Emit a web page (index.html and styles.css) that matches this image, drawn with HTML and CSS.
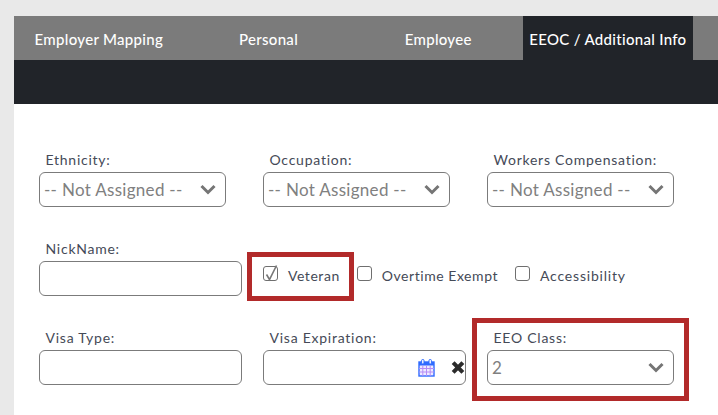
FILE: index.html
```html
<!DOCTYPE html>
<html lang="en">
<head>
    <meta charset="UTF-8">
    <title>EEOC / Additional Info</title>
    <link rel="stylesheet" href="styles.css">
</head>
<body>
    <div class="panel">
        <nav class="tabs">
            <a class="tab">Employer Mapping</a>
            <a class="tab">Personal</a>
            <a class="tab">Employee</a>
            <a class="tab active">EEOC / Additional Info</a>
        </nav>
        <div class="subbar"></div>

        <form class="form">
            <div class="row">
                <div class="field">
                    <label>Ethnicity:</label>
                    <div class="select">
                        <span>-- Not Assigned --</span>
                        <svg class="chevron" viewBox="0 0 16 11"><path d="M1.5 2 8 8.5 14.5 2"/></svg>
                    </div>
                </div>
                <div class="field">
                    <label>Occupation:</label>
                    <div class="select">
                        <span>-- Not Assigned --</span>
                        <svg class="chevron" viewBox="0 0 16 11"><path d="M1.5 2 8 8.5 14.5 2"/></svg>
                    </div>
                </div>
                <div class="field">
                    <label>Workers Compensation:</label>
                    <div class="select">
                        <span>-- Not Assigned --</span>
                        <svg class="chevron" viewBox="0 0 16 11"><path d="M1.5 2 8 8.5 14.5 2"/></svg>
                    </div>
                </div>
            </div>

            <div class="row">
                <div class="field">
                    <label>NickName:</label>
                    <div class="input"></div>
                </div>
                <div class="checks">
                    <div class="check callout callout-veteran">
                        <span class="box">
                            <svg class="tick" viewBox="0 0 16 18"><path d="M3.5 10.5 6.5 15.5 13.5 1.5"/></svg>
                        </span>
                        <span>Veteran</span>
                    </div>
                    <div class="check">
                        <span class="box"></span>
                        <span>Overtime Exempt</span>
                    </div>
                    <div class="check">
                        <span class="box"></span>
                        <span class="wide">Accessibility</span>
                    </div>
                </div>
            </div>

            <div class="row">
                <div class="field">
                    <label>Visa Type:</label>
                    <div class="input"></div>
                </div>
                <div class="field">
                    <label>Visa Expiration:</label>
                    <div class="input date">
                        <svg class="calendar" viewBox="0 0 17 18">
                            <rect x="1" y="3" width="15" height="14" fill="#efeaff" stroke="#2f6bff" stroke-width="1.4"/>
                            <rect x="1" y="3" width="15" height="3.5" fill="#2f6bff"/>
                            <rect x="3.6" y="0.5" width="2.4" height="4.5" rx="1" fill="#fff" stroke="#2f6bff"/>
                            <rect x="11" y="0.5" width="2.4" height="4.5" rx="1" fill="#fff" stroke="#2f6bff"/>
                            <path d="M1 9.5h15M1 13h15M4.8 6.5V17M8.5 6.5V17M12.2 6.5V17" stroke="#b58cf5" stroke-width="1" fill="none"/>
                        </svg>
                        <svg class="clear" viewBox="0 0 13 12"><path d="M2 1.5 11 10.5M11 1.5 2 10.5"/></svg>
                    </div>
                </div>
                <div class="field callout callout-eeo">
                    <label>EEO Class:</label>
                    <div class="select">
                        <span>2</span>
                        <svg class="chevron" viewBox="0 0 16 11"><path d="M1.5 2 8 8.5 14.5 2"/></svg>
                    </div>
                </div>
            </div>
        </form>
    </div>
</body>
</html>
```

FILE: styles.css
```css
body {
    margin: 0;
    height: 415px;
    overflow: hidden;
    background-color: #e9e9e9;
    font-family: 'Lato', 'Open Sans', sans-serif;
    color: #454a57;
}

.panel {
    margin: 16px 0 0 14px;
    height: 399px;
    background: #fff;
}

.tabs {
    display: flex;
    height: 44px;
    background: #7b7b7b;
}

.tab {
    width: 169.7px;
    line-height: 47px;
    text-align: center;
    color: #fff;
    font-size: 15px;
    font-weight: 500;
    letter-spacing: 0.3px;
}

.tab.active {
    background: #212429;
}

.subbar {
    height: 44px;
    background: #212429;
}

.form {
    padding: 46px 0 0 25px;
}

.row {
    display: flex;
    height: 57px;
    margin-bottom: 32px;
}

.field {
    width: 224px;
    flex: none;
}

.field label {
    display: block;
    height: 22px;
    line-height: 20px;
    padding-left: 6.5px;
    font-size: 14px;
    letter-spacing: 0.75px;
}

.select,
.input {
    box-sizing: border-box;
    height: 35px;
    border: 1px solid #7b7b7b;
    border-radius: 6px;
    background: #fff;
}

.select {
    display: flex;
    align-items: center;
    justify-content: space-between;
    width: 187px;
    padding: 0 9px 0 4px;
    font-size: 17px;
    letter-spacing: 0.3px;
    color: #808080;
}

.input {
    width: 203px;
}

.date {
    display: flex;
    align-items: center;
    justify-content: flex-end;
}

.chevron {
    width: 16px;
    height: 11px;
    fill: none;
    stroke: #757575;
    stroke-width: 3;
}

.calendar {
    width: 17px;
    height: 18px;
    margin-right: 16px;
}

.clear {
    width: 14px;
    height: 13px;
    fill: none;
    stroke: #2b2b2b;
    stroke-width: 3.8;
}

.checks {
    display: flex;
    gap: 17px;
    padding-top: 27px;
    font-size: 14px;
    letter-spacing: 0.55px;
}

.check {
    display: flex;
    gap: 10px;
    height: 20px;
    line-height: 20px;
}

.wide {
    letter-spacing: 0.8px;
}

.box {
    position: relative;
    box-sizing: border-box;
    width: 15px;
    height: 15px;
    border: 1px solid #6f6f6f;
    border-radius: 3px;
}

.tick {
    position: absolute;
    left: -1px;
    top: -3px;
    width: 16px;
    height: 18px;
    fill: none;
    stroke: #777;
    stroke-width: 1.6;
}

.callout {
    position: relative;
}

.callout::after {
    content: '';
    position: absolute;
    border: 5px solid #b22a2a;
}

.callout-veteran::after {
    left: -16px;
    right: -14px;
    top: -14px;
    bottom: -15px;
}

.callout-eeo::after {
    left: -15px;
    right: 22px;
    top: -10px;
    bottom: -16px;
}
```
